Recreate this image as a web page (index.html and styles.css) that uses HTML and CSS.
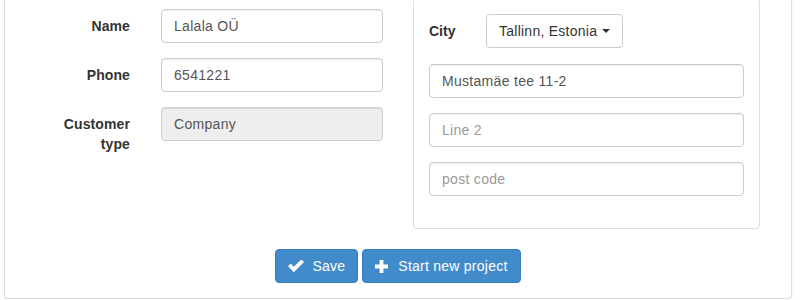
FILE: index.html
```html
<!DOCTYPE html>
<html lang="en">
<head>
<meta charset="UTF-8">
<meta name="viewport" content="width=device-width, initial-scale=1.0">
<link rel="stylesheet" href="styles.css">
<title>Customer</title>
</head>
<body>
<div class="panel">
  <div class="panel-row">
    <div class="left-form">
      <div class="form-group">
        <label class="control-label" for="name">Name</label>
        <input type="text" id="name" class="form-control" value="Lalala OÜ">
      </div>
      <div class="form-group">
        <label class="control-label" for="phone">Phone</label>
        <input type="text" id="phone" class="form-control" value="6541221">
      </div>
      <div class="form-group">
        <label class="control-label" for="ctype">Customer type</label>
        <input type="text" id="ctype" class="form-control" value="Company" disabled>
      </div>
    </div>

    <div class="address-box">
      <div class="city-row">
        <label class="city-label">City</label>
        <button type="button" class="btn btn-default">Tallinn, Estonia <span class="caret"></span></button>
      </div>
      <input type="text" class="form-control wide" value="Mustamäe tee 11-2">
      <input type="text" class="form-control wide" placeholder="Line 2">
      <input type="text" class="form-control wide" placeholder="post code">
    </div>
  </div>

  <div class="actions">
    <button type="button" class="btn btn-primary btn-save">
      <svg class="icon" width="16" height="12" viewBox="0 0 16 12"><polygon points="0,6.2 2.6,3.6 5.8,6.8 13.4,-0.6 16,2 5.8,12.2" fill="#fff"/></svg>Save
    </button>
    <button type="button" class="btn btn-primary btn-new">
      <svg class="icon" width="13" height="13" viewBox="0 0 13 13"><path d="M4.6 0h3.8v4.6H13v3.8H8.4V13H4.6V8.4H0V4.6h4.6z" fill="#fff"/></svg>Start new project
    </button>
  </div>
</div>
</body>
</html>
```

FILE: styles.css
```css
body {
  margin: 0;
  background: #fff;
  font-family: "Liberation Sans", Arial, sans-serif;
  font-size: 14px;
  line-height: 20px;
  color: #333;
}

.panel {
  box-sizing: border-box;
  width: 788px;
  margin: -20px 0 0 4px;
  padding: 17px 0 15px 0;
  border: 1px solid #ddd;
  border-radius: 4px;
  box-shadow: 0 1px 2px rgba(0, 0, 0, 0.08);
  background: #fff;
}

.panel-row {
  display: flex;
  align-items: flex-start;
  gap: 30px;
}

.left-form {
  padding: 11px 0 0 45px;
}

.form-group {
  display: flex;
  align-items: flex-start;
  gap: 31px;
  margin-bottom: 15px;
}

.form-group:last-child {
  margin-top: 1px;
}

.control-label {
  box-sizing: border-box;
  width: 80px;
  padding-top: 7px;
  text-align: right;
  font-weight: bold;
  letter-spacing: 0.1px;
}

.form-control {
  box-sizing: border-box;
  display: block;
  width: 222px;
  height: 34px;
  margin: 0;
  padding: 6px 12px;
  border: 1px solid #ccc;
  border-radius: 4px;
  box-shadow: inset 0 1px 1px rgba(0, 0, 0, 0.075);
  background: #fff;
  font-family: inherit;
  font-size: 14px;
  line-height: 20px;
  letter-spacing: 0.3px;
  color: #555;
}

.form-control::placeholder {
  color: #999;
}

.form-control:disabled {
  background: #eee;
  color: #555;
}

.address-box {
  box-sizing: border-box;
  width: 347px;
  padding: 15px 15px 17px 15px;
  border: 1px solid #ddd;
  border-radius: 4px;
}

.city-row {
  display: flex;
  align-items: center;
  margin-bottom: 16px;
}

.city-label {
  width: 57px;
  font-weight: bold;
}

.form-control.wide {
  width: 100%;
  margin-bottom: 15px;
}

.btn {
  box-sizing: border-box;
  display: inline-flex;
  align-items: center;
  height: 34px;
  padding: 6px 12px;
  border: 1px solid transparent;
  border-radius: 4px;
  font-family: inherit;
  font-size: 14px;
  line-height: 20px;
  letter-spacing: 0.25px;
  white-space: nowrap;
}

.btn-default {
  background: #fff;
  border-color: #ccc;
  color: #333;
}

.caret {
  display: inline-block;
  width: 0;
  height: 0;
  margin-left: 5px;
  border-top: 4px solid #333;
  border-left: 4px solid transparent;
  border-right: 4px solid transparent;
}

.actions {
  display: flex;
  justify-content: center;
  gap: 4px;
  margin-top: 20px;
}

.btn-primary {
  background: #428bca;
  border-color: #357ebd;
  color: #fff;
}

.btn-save .icon {
  margin-right: 8px;
}

.btn-new .icon {
  margin-right: 10px;
}
```
